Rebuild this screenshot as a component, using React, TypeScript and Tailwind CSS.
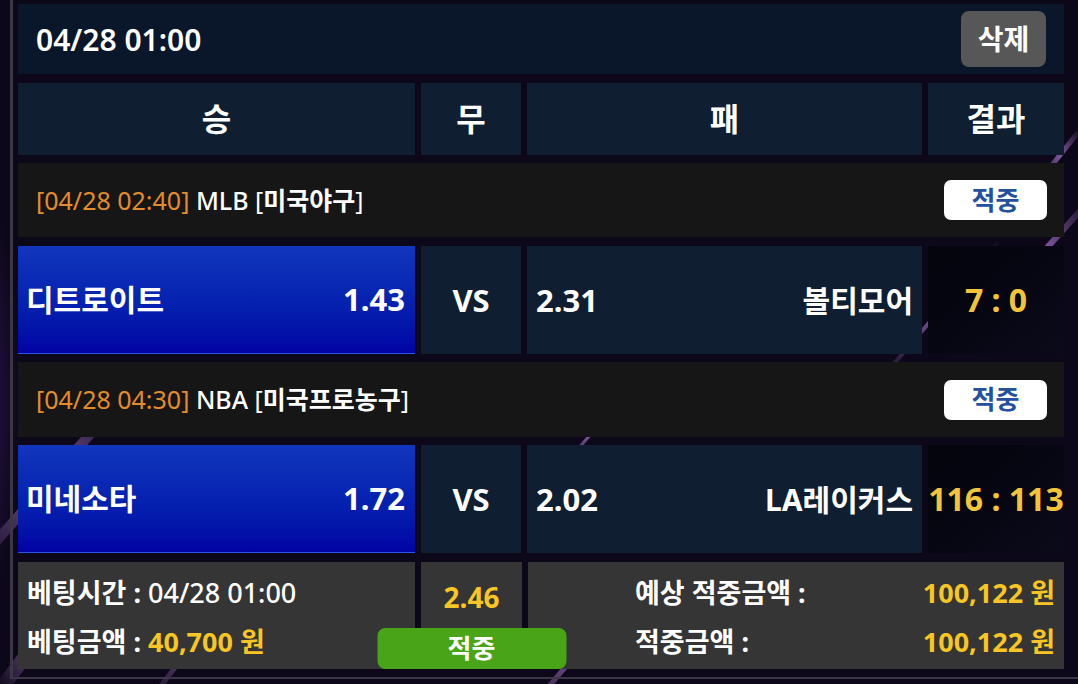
import React from 'react';

type Match = {
  time: string;
  league: string;
  leagueKr: string;
  home: string;
  homeOdds: string;
  awayOdds: string;
  away: string;
  score: string;
};

const matches: Match[] = [
  {
    time: '04/28 02:40',
    league: 'MLB',
    leagueKr: '미국야구',
    home: '디트로이트',
    homeOdds: '1.43',
    awayOdds: '2.31',
    away: '볼티모어',
    score: '7 : 0',
  },
  {
    time: '04/28 04:30',
    league: 'NBA',
    leagueKr: '미국프로농구',
    home: '미네소타',
    homeOdds: '1.72',
    awayOdds: '2.02',
    away: 'LA레이커스',
    score: '116 : 113',
  },
];

const cols = 'grid grid-cols-[397px_100px_395px_136px] gap-[6px]';

const Backdrop = () => (
  <svg className="absolute inset-0 h-full w-full" viewBox="0 0 1078 684" preserveAspectRatio="none">
    <defs>
      <linearGradient id="streak" x1="0" y1="1" x2="1" y2="0">
        <stop offset="0" stopColor="#b27ad8" stopOpacity="0" />
        <stop offset="0.5" stopColor="#b27ad8" stopOpacity="0.7" />
        <stop offset="1" stopColor="#b27ad8" stopOpacity="0" />
      </linearGradient>
      <radialGradient id="glow" cx="0" cy="0.5" r="0.5">
        <stop offset="0" stopColor="#5a22a8" stopOpacity="0.8" />
        <stop offset="1" stopColor="#5a22a8" stopOpacity="0" />
      </radialGradient>
    </defs>
    <rect x="-60" y="120" width="160" height="560" fill="url(#glow)" />
    <line x1="-20" y1="560" x2="120" y2="400" stroke="url(#streak)" strokeWidth="10" />
    <line x1="0" y1="690" x2="90" y2="570" stroke="url(#streak)" strokeWidth="14" />
    <line x1="1000" y1="300" x2="1090" y2="200" stroke="url(#streak)" strokeWidth="6" />
    <line x1="880" y1="380" x2="1000" y2="240" stroke="url(#streak)" strokeWidth="4" />
    <line x1="1040" y1="180" x2="1080" y2="130" stroke="url(#streak)" strokeWidth="5" />
    <line x1="520" y1="720" x2="640" y2="580" stroke="url(#streak)" strokeWidth="5" />
    <line x1="150" y1="700" x2="250" y2="570" stroke="url(#streak)" strokeWidth="5" />
    <line x1="560" y1="470" x2="620" y2="400" stroke="url(#streak)" strokeWidth="3" />
  </svg>
);

const LeagueRow = ({ m, h }: { m: Match; h: string }) => (
  <div className={`flex ${h} w-[1046px] items-center justify-between bg-[#161616] pl-[18px] pr-[17px]`}>
    <div className="text-[25px] leading-none text-white">
      <span className="text-[#e38c2d]">[{m.time}]</span>{' '}
      <span className="font-medium">{m.league}</span>{' '}
      <span>[</span>
      <span className="font-bold">{m.leagueKr}</span>
      <span>]</span>
    </div>
    <div className="flex h-[40px] w-[103px] items-center justify-center rounded-[7px] bg-white text-[26px] font-bold text-[#24509e]">
      적중
    </div>
  </div>
);

const MatchRow = ({ m }: { m: Match }) => (
  <div className={`${cols} h-[108px] font-bold text-white`}>
    <div className="flex items-center justify-between border-b border-[#3152e6] bg-gradient-to-b from-[#1236bd] to-[#0202a3] pl-[8px] pr-[10px]">
      <span className="text-[30px]">{m.home}</span>
      <span className="text-[31px]">{m.homeOdds}</span>
    </div>
    <div className="flex items-center justify-center bg-[#0f1e31] text-[31px]">VS</div>
    <div className="flex items-center justify-between bg-[#0f1e31] pl-[9px] pr-[9px]">
      <span className="text-[31px]">{m.awayOdds}</span>
      <span className="text-[30px]">{m.away}</span>
    </div>
    <div className="flex items-center justify-center bg-gradient-to-br from-[#04040c] to-[#0a0a1a] text-[32px] text-[#f2c43a] whitespace-nowrap">
      {m.score}
    </div>
  </div>
);

export default function App() {
  return (
    <div className="relative h-[684px] w-[1078px] overflow-hidden bg-[#0d0819] font-['Noto_Sans','Noto_Sans_CJK_KR',sans-serif]">
      <Backdrop />
      <div className="relative ml-[10px] border-b-2 border-l-[3px] border-[#3b3744] pb-[8px] pl-[5px] pt-[4px]">
        {/* Date bar */}
        <div className="flex h-[70px] w-[1046px] items-center justify-between bg-[#0a1629] pl-[18px] pr-[18px]">
          <span className="text-[30px] font-semibold text-white">04/28 01:00</span>
          <button className="flex h-[56px] w-[85px] items-center justify-center rounded-[8px] bg-[#575757] text-[28px] font-bold text-white">
            삭제
          </button>
        </div>

        {/* Column headers */}
        <div className={`${cols} mt-[9px] h-[72px] text-[32px] font-bold text-white`}>
          <div className="flex items-center justify-center bg-[#0f1e31]">승</div>
          <div className="flex items-center justify-center bg-[#0f1e31]">무</div>
          <div className="flex items-center justify-center bg-[#0f1e31]">패</div>
          <div className="flex items-center justify-center bg-[#0f1e31]">결과</div>
        </div>

        <div className="mt-2">
          <LeagueRow m={matches[0]} h="h-[74px]" />
        </div>
        <div className="mt-[9px]">
          <MatchRow m={matches[0]} />
        </div>
        <div className="mt-2">
          <LeagueRow m={matches[1]} h="h-[75px]" />
        </div>
        <div className="mt-2">
          <MatchRow m={matches[1]} />
        </div>

        {/* Summary */}
        <div className="mt-[9px] grid h-[107px] w-[1046px] grid-cols-[397px_101px_536px] gap-[6px] text-white">
          <div className="flex flex-col gap-[13px] bg-[#353535] pl-[9px] pt-[13px] text-[27px] leading-[36px] whitespace-nowrap">
            <div>
              <span className="font-bold">베팅시간 : </span>
              <span className="font-medium">04/28 01:00</span>
            </div>
            <div>
              <span className="font-bold">베팅금액 : </span>
              <span className="font-bold text-[#f7c624]">40,700 원</span>
            </div>
          </div>
          <div className="relative z-10 flex justify-center bg-[#353535] pt-[17px]">
            <span className="text-[28px] font-bold leading-[36px] text-[#f7c624]">2.46</span>
            <div className="absolute bottom-0 left-1/2 flex h-[41px] w-[189px] -translate-x-1/2 items-center justify-center rounded-[8px] bg-[#4aa417] text-[26px] font-bold">
              적중
            </div>
          </div>
          <div className="flex flex-col gap-[13px] bg-[#353535] pl-[107px] pr-[9px] pt-[13px] text-[27px] font-bold leading-[36px]">
            <div className="flex justify-between">
              <span>예상 적중금액 :</span>
              <span className="text-[#f7c624]">100,122 원</span>
            </div>
            <div className="flex justify-between">
              <span>적중금액 :</span>
              <span className="text-[#f7c624]">100,122 원</span>
            </div>
          </div>
        </div>
      </div>
    </div>
  );
}
